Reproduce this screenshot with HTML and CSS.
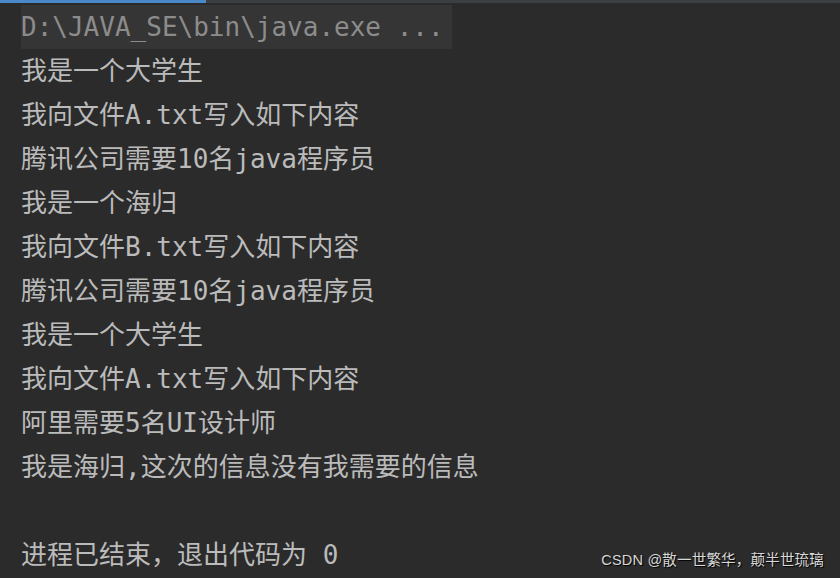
FILE: index.html
```html
<!DOCTYPE html>
<html>
<head>
<meta charset="utf-8">
<link rel="stylesheet" href="styles.css">
</head>
<body>
<div class="tabbar"><div class="tab-active"></div></div>
<div class="console">
  <div class="line cmd"><span class="cmd-box">D:\JAVA_SE\bin\java.exe ...</span></div>
  <div class="line">我是一个大学生</div>
  <div class="line">我向文件A.txt写入如下内容</div>
  <div class="line">腾讯公司需要10名java程序员</div>
  <div class="line">我是一个海归</div>
  <div class="line">我向文件B.txt写入如下内容</div>
  <div class="line">腾讯公司需要10名java程序员</div>
  <div class="line">我是一个大学生</div>
  <div class="line">我向文件A.txt写入如下内容</div>
  <div class="line">阿里需要5名UI设计师</div>
  <div class="line">我是海归,这次的信息没有我需要的信息</div>
  <div class="line empty"></div>
  <div class="line">进程已结束，退出代码为 0</div>
</div>
<div class="watermark">CSDN @散一世繁华，颠半世琉璃</div>
</body>
</html>
```
FILE: styles.css
```css
html, body {
  margin: 0;
  padding: 0;
  background: #2b2b2b;
  width: 840px;
  height: 578px;
  overflow: hidden;
  position: relative;
}
.tabbar {
  height: 3px;
  background: #3c3f41;
  display: flex;
}
.tab-active {
  width: 206px;
  background: #4a88c7;
}
.console {
  padding: 2px 0 0 21px;
  font-family: "DejaVu Sans Mono", "Noto Sans CJK SC", monospace;
  font-size: 26px;
  color: #bbbbbb;
}
.line {
  height: 44px;
  line-height: 44px;
  white-space: pre;
}
.cmd-box {
  display: inline-block;
  background: #353535;
  color: #8c8c8c;
  height: 44px;
  padding-right: 8px;
}
.watermark {
  position: absolute;
  right: 16px;
  bottom: 9px;
  font-family: "Liberation Sans", "Noto Sans CJK SC", sans-serif;
  font-size: 14.5px;
  letter-spacing: 0.2px;
  color: #d8d8d8;
  text-shadow: 1px 1px 1px #000;
}
```
